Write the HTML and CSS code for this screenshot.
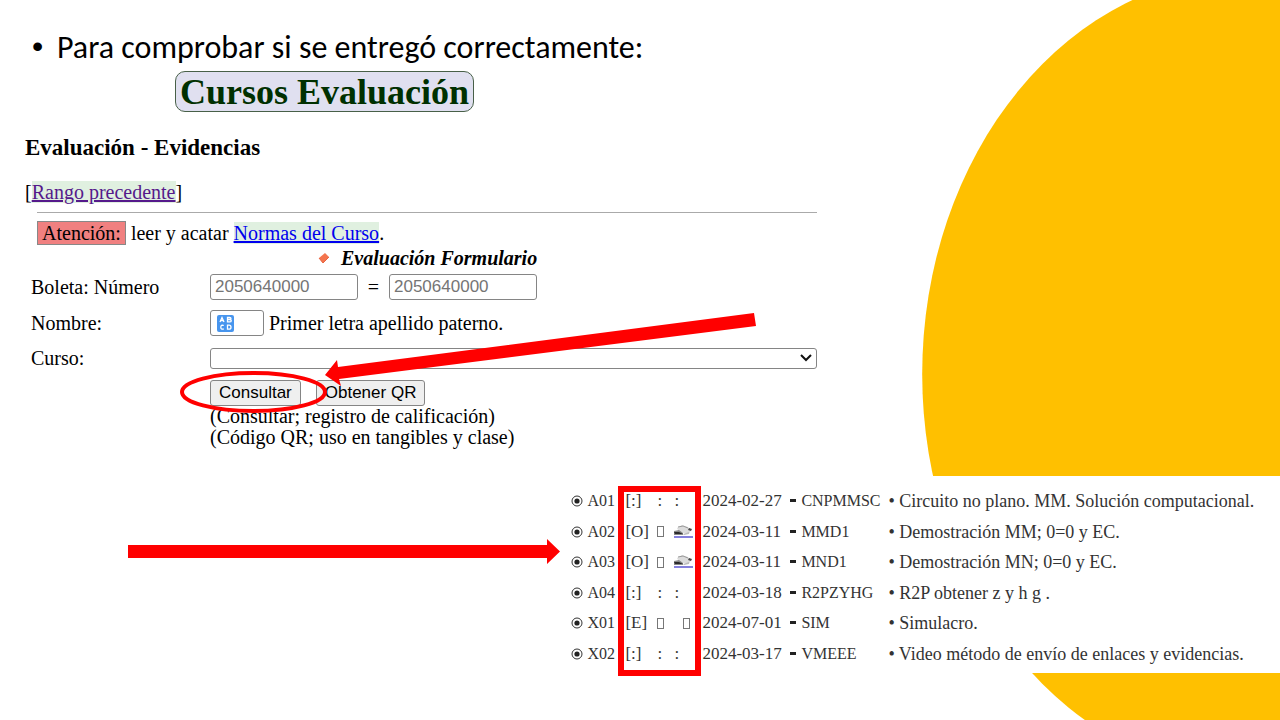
FILE: index.html
```
<!DOCTYPE html>
<html lang="es">
<head>
  <meta charset="UTF-8" />
  <meta name="viewport" content="width=device-width, initial-scale=1" />
  <title>Cursos Evaluación</title>
  <link rel="stylesheet" href="styles.css">
</head>
<body>
  <!-- shared icons -->
  <svg class="defs" aria-hidden="true">
    <symbol id="target" viewBox="0 0 12 12">
      <circle cx="6" cy="6" r="5" fill="none" stroke="#333" stroke-width="1" />
      <circle cx="6" cy="6" r="2.6" fill="#222" />
    </symbol>
    <symbol id="device" viewBox="0 0 19 14">
      <path d="M3 3 8 0 14 2 17 5 15 9 5 7z" fill="#dcdcdc" />
      <path d="M4 2 9 1 14 3" fill="none" stroke="#999" />
      <path d="M0 6 5 5 9 8 9 10H0z" fill="#888" />
      <path d="M0 7h5l4 2H1z" fill="#2b2b2b" />
      <path d="M15 3l3 1-1 2-3-1z" fill="#444" />
      <path d="M9 9l6-2v2l-5 1z" fill="#bbb" />
      <path d="M0 11h19v2H0z" fill="#8480dc" />
    </symbol>
  </svg>

  <div class="slide">
    <svg class="blob" viewBox="0 0 358 720" aria-hidden="true">
      <ellipse cx="329" cy="374" rx="329" ry="401" fill="#ffc000" />
    </svg>

    <section class="course">
      <ul class="intro">
        <li>Para comprobar si se entregó correctamente:</li>
      </ul>
      <h1>Cursos Evaluación</h1>
      <h2>Evaluación - Evidencias</h2>
      <p class="back">[<a class="visited" href="#">Rango precedente</a>]</p>
      <hr />
      <p class="notice"><mark>Atención:</mark> leer y acatar <a href="#">Normas del Curso</a>.</p>

      <form>
        <h3>
          <svg width="12" height="12" viewBox="0 0 12 12" aria-hidden="true">
            <path d="M1 6 7 1 11 5 5 11z" fill="#f4754e" />
            <path d="M1 6 5 11 11 5" fill="none" stroke="#e8633f" />
          </svg>
          Evaluación Formulario
        </h3>
        <div class="row">
          <label for="boleta">Boleta: Número</label>
          <div class="field">
            <input type="text" id="boleta" placeholder="2050640000" />
            <span class="equals">=</span>
            <input type="text" id="boleta2" aria-label="Confirmar boleta" placeholder="2050640000" />
          </div>
        </div>
        <div class="row name-row">
          <label for="nombre">Nombre:</label>
          <div class="field">
            <span class="letter">
              <input type="text" id="nombre" />
              <svg width="17" height="17" viewBox="0 0 17 17" aria-hidden="true">
                <rect width="17" height="17" rx="2" fill="#4795ee" />
                <g fill="none" stroke="#fff" stroke-width="1.3">
                  <path d="M3 7 5 2.5 7 7M4 5.5h2" />
                  <path d="M10.5 2.5h2q1.5 0 1.5 1t-1.5 1h-2h2q1.8 0 1.8 1.2t-1.8 1.2h-2z" />
                  <path d="M6.8 10.5q-3-1-3 1.7t3 1.7" />
                  <path d="M10.5 10.2h1.5q2 0 2 2t-2 2h-1.5z" />
                </g>
              </svg>
            </span>
            <span>Primer letra apellido paterno.</span>
          </div>
        </div>
        <div class="row course-row">
          <label for="curso">Curso:</label>
          <div class="select">
            <select id="curso"><option></option></select>
            <svg width="12" height="8" viewBox="0 0 12 8" aria-hidden="true">
              <path d="M1 1l5 5 5-5" fill="none" stroke="#111" stroke-width="2" />
            </svg>
          </div>
        </div>
        <div class="buttons">
          <button type="button">Consultar</button>
          <button type="button">Obtener QR</button>
        </div>
        <p class="help">(Consultar; registro de calificación)<br />(Código QR; uso en tangibles y clase)</p>
      </form>
    </section>

    <section class="results">
      <table>
        <tr>
          <td class="mark"><svg><use href="#target" /></svg></td><td class="code">A01</td><td class="state">[:]</td><td class="sent">:</td><td class="file">:</td>
          <td class="date">2024-02-27</td><td class="key">CNPMMSC</td><td class="title">• Circuito no plano. MM. Solución computacional.</td>
        </tr>
        <tr>
          <td class="mark"><svg><use href="#target" /></svg></td><td class="code">A02</td><td class="state">[O]</td><td class="sent"><i></i></td><td class="file"><svg><use href="#device" /></svg></td>
          <td class="date">2024-03-11</td><td class="key">MMD1</td><td class="title">• Demostración MM; 0=0 y EC.</td>
        </tr>
        <tr>
          <td class="mark"><svg><use href="#target" /></svg></td><td class="code">A03</td><td class="state">[O]</td><td class="sent"><i></i></td><td class="file"><svg><use href="#device" /></svg></td>
          <td class="date">2024-03-11</td><td class="key">MND1</td><td class="title">• Demostración MN; 0=0 y EC.</td>
        </tr>
        <tr>
          <td class="mark"><svg><use href="#target" /></svg></td><td class="code">A04</td><td class="state">[:]</td><td class="sent">:</td><td class="file">:</td>
          <td class="date">2024-03-18</td><td class="key">R2PZYHG</td><td class="title">• R2P obtener z y h g .</td>
        </tr>
        <tr>
          <td class="mark"><svg><use href="#target" /></svg></td><td class="code">X01</td><td class="state">[E]</td><td class="sent"><i></i></td><td class="file last"><i></i></td>
          <td class="date">2024-07-01</td><td class="key">SIM</td><td class="title">• Simulacro.</td>
        </tr>
        <tr>
          <td class="mark"><svg><use href="#target" /></svg></td><td class="code">X02</td><td class="state">[:]</td><td class="sent">:</td><td class="file">:</td>
          <td class="date">2024-03-17</td><td class="key">VMEEE</td><td class="title">• Video método de envío de enlaces y evidencias.</td>
        </tr>
      </table>
    </section>

    <!-- red marks drawn over the page -->
    <svg class="marks" width="1280" height="720" viewBox="0 0 1280 720" aria-hidden="true">
      <ellipse cx="253.5" cy="392" rx="71.5" ry="19" fill="none" stroke="#f00" stroke-width="4" />
      <path d="M325 375 337 360 338 367 754 313 756 326 339 379 341 386z" fill="#f00" />
      <path d="M128 545H547V539L560 551.5 547 564V558H128z" fill="#f00" />
      <rect x="621" y="489" width="77" height="184" fill="none" stroke="#f00" stroke-width="6" />
    </svg>
  </div>
</body>
</html>
```
FILE: styles.css
```
:root {
  --color-title: #003000;
  --color-title-bg: #e0e0f0;
  --color-link-bg: #e0f0e0;
  --color-border: #858585;
}

* {
  box-sizing: border-box;
}

body {
  margin: 0;
  background: #fff;
  color: #000;
  font-family: "Liberation Serif", "Times New Roman", serif;
  font-size: 20px;
  line-height: 22px;
}

h1, h2, h3, p, ul {
  margin: 0;
}

.defs {
  position: absolute;
  width: 0;
  height: 0;
}

.slide {
  position: relative;
  min-height: 100vh;
  overflow: hidden;
}

.blob {
  position: absolute;
  top: 0;
  right: 0;
  width: 28%;
  height: 100%;
}

.marks {
  position: absolute;
  top: 0;
  left: 0;
  pointer-events: none;
}

/* Course form */
.course {
  position: relative;
  width: 64%;
  padding: 29px 2px 0 25px;
}

.intro {
  padding-left: 32px;
  font-family: Carlito, Calibri, Lato, sans-serif;
  font-size: 32px;
  line-height: 38px;
  list-style: none;
}

.intro li::before {
  content: "•";
  float: left;
  margin-left: -25px;
  font-family: "Liberation Sans", Arial, sans-serif;
  line-height: 34px;
}

h1 {
  width: fit-content;
  margin: 4px 0 0 150px;
  padding: 1px 4px 0;
  border: 1px solid #486048;
  border-radius: 10px;
  background: var(--color-title-bg);
  color: var(--color-title);
  font-size: 36px;
  line-height: 38px;
}

h2 {
  margin-top: 24px;
  font-size: 23px;
  line-height: 24px;
}

.back {
  margin-top: 21px;
}

a {
  background: var(--color-link-bg);
  color: #00e;
}

a.visited {
  color: #551a8b;
}

hr {
  height: 1px;
  margin: 9px 0 9px 12px;
  border: 0;
  background: #aaa;
}

.notice {
  margin-left: 12px;
}

mark {
  padding: 0 4px;
  border: 1px solid #888;
  background: #f08080;
}

form {
  padding-left: 6px;
}

h3 {
  display: flex;
  align-items: center;
  gap: 11px;
  margin: 3px 0 5px 287px;
  font-size: 20px;
  font-style: italic;
  line-height: 22px;
}

.row {
  display: grid;
  grid-template-columns: 179px 1fr;
  align-items: center;
}

.field {
  display: flex;
  align-items: center;
  gap: 5px;
}

input,
select {
  height: 26px;
  padding: 0 4px;
  border: 1px solid var(--color-border);
  border-radius: 3px;
  background: #fff;
  font-family: "Liberation Sans", Arial, sans-serif;
  font-size: 17px;
}

input {
  width: 148px;
}

input::placeholder {
  color: #757575;
}

.equals {
  width: 21px;
  text-align: center;
}

.name-row {
  margin-top: 10px;
}

.letter,
.select {
  display: grid;
  align-items: center;
}

.letter > *,
.select > * {
  grid-area: 1 / 1;
}

.letter input {
  width: 54px;
}

.letter svg {
  margin-left: 7px;
}

.course-row {
  margin-top: 11px;
}

.select select {
  width: 100%;
  height: 21px;
  appearance: none;
}

.select svg {
  justify-self: end;
  margin-right: 5px;
  pointer-events: none;
}

.buttons {
  display: flex;
  gap: 15px;
  margin: 11px 0 0 179px;
}

button {
  height: 26px;
  padding: 0 8px;
  border: 1px solid var(--color-border);
  border-radius: 3px;
  background: #efefef;
  color: #000;
  font-family: "Liberation Sans", Arial, sans-serif;
  font-size: 17px;
}

.help {
  margin-left: 179px;
  line-height: 21px;
}

/* Results list */
.results {
  position: relative;
  margin: 28px 0 0 43%;
  padding: 10px 0 4px 21px;
  background: #fff;
}

table {
  height: 183px;
  border-collapse: collapse;
  color: #333;
  font-size: 17px;
  line-height: 20px;
}

td {
  padding: 0;
  white-space: nowrap;
}

td svg {
  display: block;
  width: 19px;
  height: 14px;
}

.mark {
  width: 16px;
}

.mark svg {
  width: 12px;
  height: 12px;
}

.code {
  width: 38px;
}

.code,
.key {
  font-size: 16px;
}

.title {
  font-size: 18px;
}

.state {
  width: 32px;
}

.sent {
  width: 17px;
}

.file {
  width: 28px;
}

.last i {
  margin-left: 9px;
}

.date {
  width: 88px;
}

.key {
  width: 98px;
}

.key::before {
  content: "";
  display: inline-block;
  width: 6px;
  height: 3px;
  margin-right: 5px;
  background: #222;
  vertical-align: 4px;
}

i {
  display: block;
  width: 7px;
  height: 11px;
  border: 1px solid #777;
}
```
